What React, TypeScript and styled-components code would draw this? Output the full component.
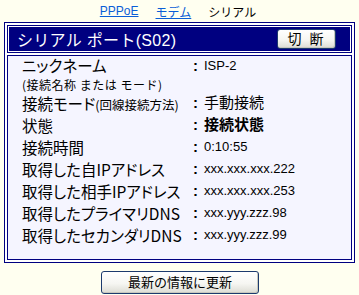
import styled, { createGlobalStyle } from "styled-components";

const GlobalStyle = createGlobalStyle`
  html, body {
    margin: 0;
    padding: 0;
    background: #fffff0;
  }
  body {
    font-family: "Liberation Sans", "Noto Sans CJK JP", sans-serif;
    color: #000;
  }
`;

const Page = styled.div`
  width: 359px;
  height: 295px;
  padding: 0 4px;
  box-sizing: border-box;
  display: flex;
  flex-direction: column;
  align-items: stretch;
`;

const Tabs = styled.nav`
  height: 22px;
  display: flex;
  justify-content: center;
  align-items: center;
  gap: 17px;
  font-size: 12px;
  padding-right: 3px;
`;

const TabLink = styled.a<{ $active?: boolean }>`
  color: ${(p) => (p.$active ? "#000" : "#0a5ed7")};
  text-decoration: ${(p) => (p.$active ? "none" : "underline")};
  cursor: pointer;
`;

const Frame = styled.section`
  border: 1px solid #000080;
  background: #fff;
  padding: 2px;
  display: flex;
  flex-direction: column;
  gap: 2px;
`;

const Header = styled.div`
  height: 28px;
  box-sizing: border-box;
  background: #000080;
  border: 1px solid #000080;
  box-shadow: inset 0 0 0 1px #fff;
  display: flex;
  align-items: center;
  justify-content: space-between;
  padding: 0 15px 0 9px;
`;

const Title = styled.h1`
  margin: 0;
  color: #fff;
  font-size: 16px;
  font-weight: normal;
  letter-spacing: 0.3px;
`;

const Button = styled.button<{ $wide?: boolean }>`
  font-family: "Liberation Sans", "Noto Sans CJK JP", sans-serif;
  font-size: ${(p) => (p.$wide ? "13px" : "14px")};
  color: #000;
  width: ${(p) => (p.$wide ? "158px" : "59px")};
  height: ${(p) => (p.$wide ? "23px" : "20px")};
  padding: 0;
  border: 1px solid #1c3a6e;
  border-radius: 3px;
  background: linear-gradient(#ffffff 0%, #f6f6f2 55%, #dcdcd4 100%);
  box-shadow: inset -1px -1px 0 #c8c8be;
  letter-spacing: ${(p) => (p.$wide ? "0" : "2px")};
  line-height: 1;
`;

const Body = styled.div`
  height: 205px;
  box-sizing: border-box;
  border: 1px solid #000080;
  background: #f5f5ff;
  padding: 0 0 0 14px;
  display: grid;
  grid-template-columns: 171px 11px 1fr;
  grid-auto-rows: 22px;
  grid-template-rows: 37px;
  align-content: start;
`;

const Label = styled.div`
  font-family: "Noto Sans CJK JP", sans-serif;
  font-feature-settings: "palt";
  font-size: 15.5px;
  line-height: 20px;
  white-space: nowrap;
`;

const NickLabel = styled(Label)`
  line-height: 19px;
`;

const Note = styled.div`
  font-family: "Noto Sans CJK JP", sans-serif;
  font-size: 12px;
  letter-spacing: 0.5px;
  line-height: 16px;
  margin-top: 2px;
  white-space: nowrap;
`;

const Small = styled.span`
  font-size: 12.5px;
`;

const Colon = styled.div`
  font-size: 15px;
  line-height: 20px;
  font-weight: bold;
`;

const Value = styled.div<{ $jp?: boolean; $bold?: boolean }>`
  font-size: ${(p) => (p.$jp ? "15px" : "13px")};
  font-weight: ${(p) => (p.$bold ? "bold" : "normal")};
  line-height: 20px;
  white-space: nowrap;
`;

const Footer = styled.div`
  display: flex;
  justify-content: center;
  padding-top: 8px;
  padding-left: 1px;
`;

type Row = { label: React.ReactNode; value: string; jp?: boolean; bold?: boolean };

const rows: Row[] = [
  {
    label: (
      <>
        接続モード<Small>(回線接続方法)</Small>
      </>
    ),
    value: "手動接続",
    jp: true,
  },
  { label: "状態", value: "接続状態", jp: true, bold: true },
  { label: "接続時間", value: "0:10:55" },
  { label: "取得した自IPアドレス", value: "xxx.xxx.xxx.222" },
  { label: "取得した相手IPアドレス", value: "xxx.xxx.xxx.253" },
  { label: "取得したプライマリDNS", value: "xxx.yyy.zzz.98" },
  { label: "取得したセカンダリDNS", value: "xxx.yyy.zzz.99" },
];

const App = () => {
  return (
    <Page>
      <GlobalStyle />
      <Tabs>
        <TabLink>PPPoE</TabLink>
        <TabLink>モデム</TabLink>
        <TabLink $active>シリアル</TabLink>
      </Tabs>
      <Frame>
        <Header>
          <Title>シリアル ポート(S02)</Title>
          <Button>切 断</Button>
        </Header>
        <Body>
          <div>
            <NickLabel>ニックネーム</NickLabel>
            <Note>(接続名称 または モード)</Note>
          </div>
          <Colon>:</Colon>
          <Value>ISP-2</Value>
          {rows.map((r, i) => (
            <>
              <Label key={"l" + i}>{r.label}</Label>
              <Colon key={"c" + i}>:</Colon>
              <Value key={"v" + i} $jp={r.jp} $bold={r.bold}>
                {r.value}
              </Value>
            </>
          ))}
        </Body>
      </Frame>
      <Footer>
        <Button $wide>最新の情報に更新</Button>
      </Footer>
    </Page>
  );
};

export default App;
